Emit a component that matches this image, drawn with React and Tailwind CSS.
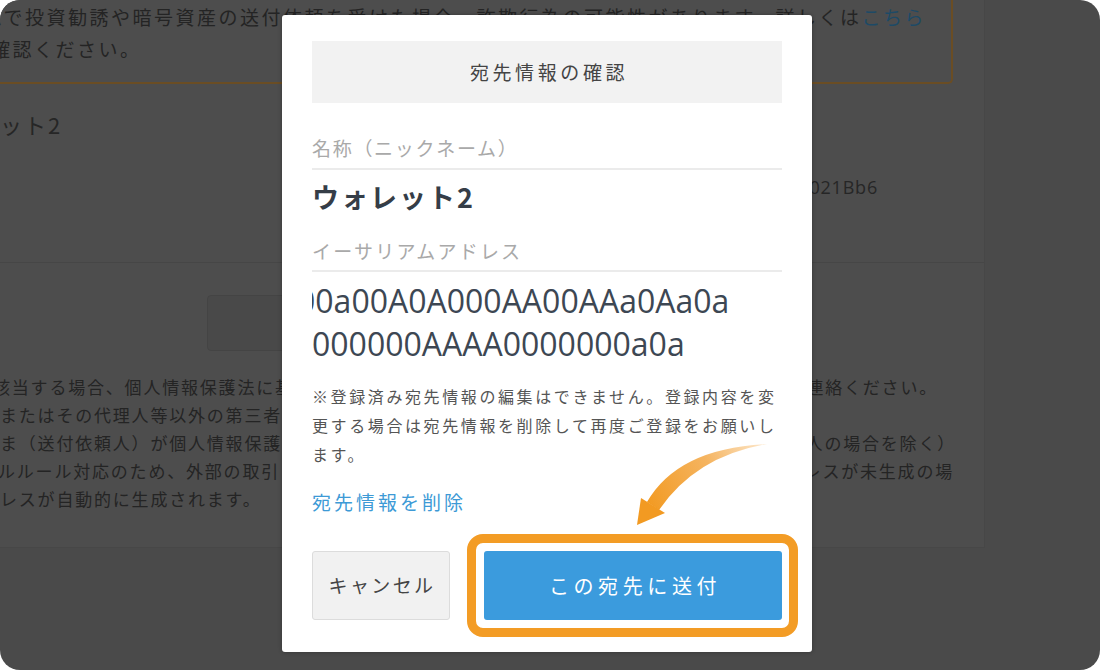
const jp = { fontFamily: '"Noto Sans CJK JP", "Noto Sans", sans-serif' };
const latin = { fontFamily: '"Open Sans", "Noto Sans", sans-serif' };

const CurvedArrow = () => (
  <svg
    className="absolute left-[600px] top-[430px] pointer-events-none"
    width="200"
    height="110"
    viewBox="0 0 200 110"
  >
    <defs>
      <linearGradient id="arrowFade" x1="167" y1="16" x2="50" y2="80" gradientUnits="userSpaceOnUse">
        <stop offset="0" stopColor="#fde8cc" />
        <stop offset="0.45" stopColor="#f5b460" />
        <stop offset="1" stopColor="#f29a22" />
      </linearGradient>
    </defs>
    <path d="M47 72 Q78 18 167 14 Q96 26 59 80 Z" fill="url(#arrowFade)" />
    <path d="M37 95 L41 68 L65 83 Z" fill="#f29a22" />
  </svg>
);

const BackgroundPage = () => (
  <div
    className="w-[985px] h-[548px] bg-[#4d4d4d] overflow-hidden text-[#242424] border-r border-b border-[#474747]"
    style={jp}
  >
    {/* warning box */}
    <div className="ml-[-30px] w-[983px] h-[84px] border-2 border-t-0 border-[#6a4d24] rounded-br-[5px] pt-[1px] text-[19px] leading-[32px] tracking-[2.5px] whitespace-nowrap">
      <div className="ml-[10px]">認で投資勧誘や暗号資産の送付依頼を受けた場合、詐欺行為の可能性があります。詳しくは<span className="text-[#1d4a66]">こちら</span></div>
      <div className="ml-[19px]">確認ください。</div>
    </div>

    <div className="ml-[-72px] mt-[24px] text-[22px] leading-[32px] tracking-[2px] text-[#262626]">ウォレット2</div>
    <div className="flex justify-end pr-[106px] mt-[36px] text-[18px] leading-[22px] tracking-[0.8px] text-[#262626]" style={latin}>0x0000000021Bb6</div>

    <div className="mt-[64px] border-t border-[#464646]" />

    <div className="ml-[207px] mt-[32px] w-[180px] h-[56px] rounded-[4px] border border-[#444] bg-[#494949]" />

    <div className="mt-[22px] text-[17px] leading-[28px] tracking-[1.8px] whitespace-nowrap">
      <div className="flex justify-between pr-[46px]"><span className="ml-[-7px]">該当する場合、個人情報保護法に基づき</span><span>連絡ください。</span></div>
      <div className="flex justify-between"><span>またはその代理人等以外の第三者</span><span /></div>
      <div className="flex justify-between pr-[28px]"><span>ま（送付依頼人）が個人情報保護</span><span>人の場合を除く）</span></div>
      <div className="flex justify-between pr-[30px]"><span className="ml-[-2px]">ルルール対応のため、外部の取引</span><span>レスが未生成の場</span></div>
      <div><span>レスが自動的に生成されます。</span></div>
    </div>
  </div>
);

const ConfirmModal = () => (
  <div
    className="absolute left-[282px] top-[15px] w-[530px] h-[637px] bg-white rounded-[3px] px-[30px] pt-[26px] shadow-[0_0_4px_rgba(0,0,0,0.3)]"
    style={jp}
  >
    <div className="h-[62px] bg-[#f2f2f2] flex items-center justify-center text-[19px] tracking-[3.6px] text-[#444]">
      <span className="ml-[4px]">宛先情報の確認</span>
    </div>

    <div className="mt-[31px] pb-[6px] border-b-2 border-[#ebebeb] text-[19px] leading-[28px] tracking-[1.7px] text-[#a9a9a9]">
      名称（ニックネーム）
    </div>
    <div className="mt-[10px] text-[27px] leading-[34px] font-bold text-[#353d47] tracking-[2px]">
      ウォレット2
    </div>

    <div className="mt-[23px] pb-[5px] border-b-2 border-[#ebebeb] text-[19px] leading-[28px] tracking-[2.2px] text-[#a9a9a9]">
      イーサリアムアドレス
    </div>
    <div className="mt-[7px] overflow-hidden text-[32px] leading-[43px] text-[#3d4753] whitespace-nowrap" style={latin}>
      <div className="ml-[-15px]">00a00A0A000AA00AAa0Aa0a</div>
      <div>000000AAAA0000000a0a</div>
    </div>

    <p className="mt-[17px] text-[16px] leading-[29px] text-[#555] tracking-[2.6px]">
      ※登録済み宛先情報の編集はできません。登録内容を変更する場合は宛先情報を削除して再度ご登録をお願いします。
    </p>

    <div className="mt-[20px] text-[19px] leading-[26px] text-[#3d9ad6] tracking-[3px]">宛先情報を削除</div>

    <div className="mt-[36px] flex items-stretch h-[69px]">
      <button className="w-[138px] rounded-[3px] border border-[#dcdcdc] bg-[#f1f1f1] text-[19px] text-[#444] tracking-[2.4px]">
        <span className="ml-[2px]">キャンセル</span>
      </button>
      <div className="relative flex-1 ml-[34px]">
        <button className="w-full h-full rounded-[3px] bg-[#3b9bdd] text-[20px] text-white tracking-[4.6px]">
          <span className="ml-[4px]">この宛先に送付</span>
        </button>
        <div className="absolute -left-[17px] -right-[16px] -top-[17px] -bottom-[17px] rounded-[16px] border-[9px] border-[#f39c25] pointer-events-none" />
      </div>
    </div>
  </div>
);

export default function App() {
  return (
    <div className="w-[1100px] h-[670px] bg-white">
      <div className="relative w-full h-full rounded-[20px] bg-[#4a4a4a] overflow-hidden">
        <BackgroundPage />
        <ConfirmModal />
        <CurvedArrow />
      </div>
    </div>
  );
}
